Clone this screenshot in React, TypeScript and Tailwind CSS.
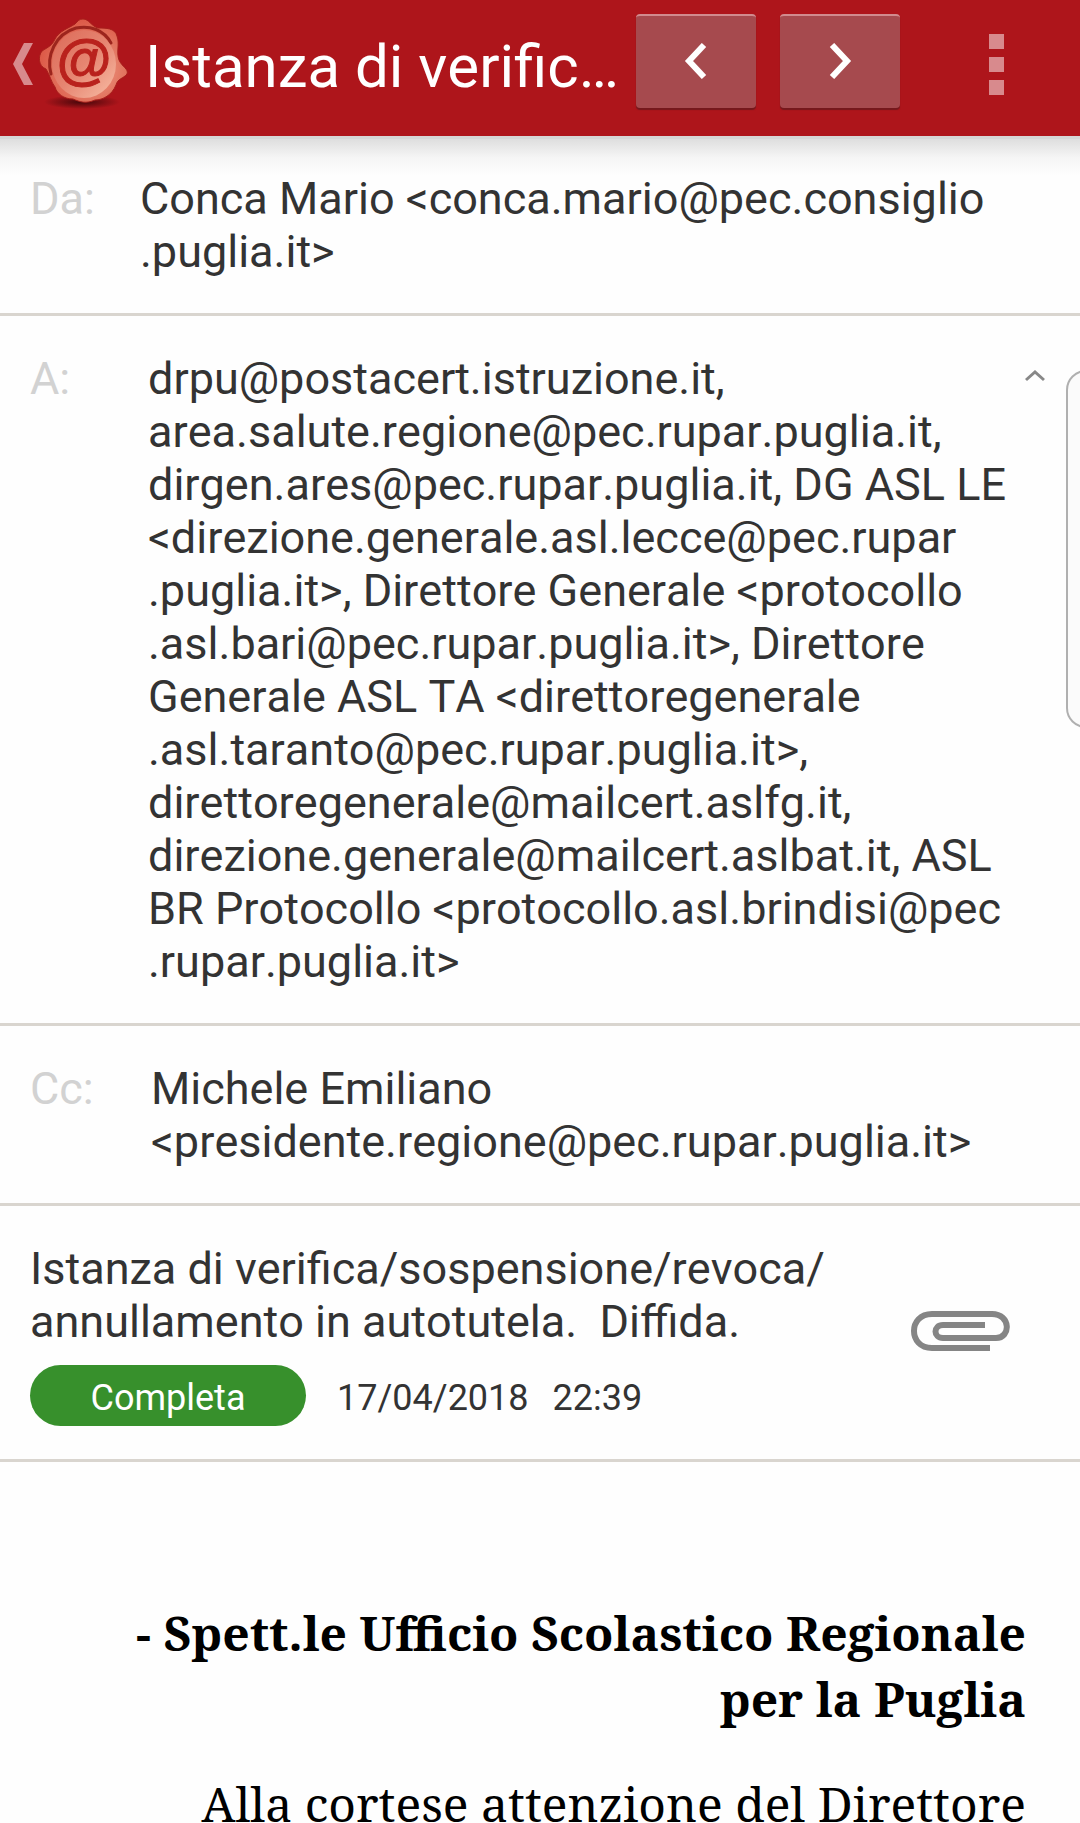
import type { ReactNode } from "react";

const sender = "Conca Mario <conca.mario@pec.consiglio\n.puglia.it>";

const recipients = `drpu@postacert.istruzione.it,
area.salute.regione@pec.rupar.puglia.it,
dirgen.ares@pec.rupar.puglia.it, DG ASL LE
<direzione.generale.asl.lecce@pec.rupar
.puglia.it>, Direttore Generale <protocollo
.asl.bari@pec.rupar.puglia.it>, Direttore
Generale ASL TA <direttoregenerale
.asl.taranto@pec.rupar.puglia.it>,
direttoregenerale@mailcert.aslfg.it,
direzione.generale@mailcert.aslbat.it, ASL
BR Protocollo <protocollo.asl.brindisi@pec
.rupar.puglia.it>`;

const copies = "Michele Emiliano\n<presidente.regione@pec.rupar.puglia.it>";

function SealLogo() {
  return (
    <svg width="92" height="94" viewBox="0 0 92 94" aria-hidden="true">
      <defs>
        <radialGradient id="wax" cx="0.6" cy="0.6" r="0.6">
          <stop offset="0" stopColor="#f0a08a" />
          <stop offset="0.6" stopColor="#e27560" />
          <stop offset="1" stopColor="#dd5a48" />
        </radialGradient>
        <linearGradient id="face" x1="0" y1="0" x2="1" y2="1">
          <stop offset="0" stopColor="#dc6a58" />
          <stop offset="0.5" stopColor="#e68571" />
          <stop offset="1" stopColor="#f8bea6" />
        </linearGradient>
        <radialGradient id="shade">
          <stop offset="0" stopColor="#3a0508" stopOpacity="0.9" />
          <stop offset="1" stopColor="#3a0508" stopOpacity="0" />
        </radialGradient>
      </defs>
      <ellipse cx="44" cy="84" rx="38" ry="7" fill="url(#shade)" />
      <path d="M45 1C51 1 53 8 60 10C68 10 77 10 79 18C82 26 78 34 81 42C84 49 91 51 89 56C85 61 80 60 78 67C74 77 65 82 57 82C48 86 42 84 35 81C26 81 19 76 17 69C13 64 12 57 8 51C0 48 0 38 4 33C10 29 14 28 17 21C21 13 31 10 37 6C40 3 41 1 45 1Z" fill="url(#wax)" stroke="#a81f1b" strokeWidth="1" />
      <path d="M13 56C8 38 17 16 38 10C52 7 66 12 73 25" fill="none" stroke="#9c251d" strokeWidth="3" strokeLinecap="round" />
      <ellipse cx="46" cy="46" rx="32" ry="34" fill="url(#face)" />
      <text x="46" y="60" textAnchor="middle" fontFamily="Liberation Sans" fontWeight="bold" fontSize="56" fill="#b9221d" stroke="#b9221d" strokeWidth="1">@</text>
    </svg>
  );
}

function Field({ label, labelClass, children }: { label: string; labelClass: string; children: ReactNode }) {
  return (
    <div className="flex border-b-[3px] border-[#d9d5cf] px-[30px] pt-9 pb-[35px]">
      <dt className={`shrink-0 text-[#d2d2d2] ${labelClass}`}>{label}</dt>
      <dd className="whitespace-pre">{children}</dd>
    </div>
  );
}

export default function App() {
  return (
    <div className="relative h-screen overflow-hidden bg-[#fefefe] font-[Roboto,sans-serif] text-[45px] leading-[53px] text-[#333] [font-kerning:none]">
      <header className="flex h-[136px] items-start bg-[#ae151b] text-white">
        <button aria-label="Indietro" className="flex shrink-0 gap-1 pt-[18px] pl-3">
          <svg className="mt-[25px]" width="22" height="42" viewBox="0 0 22 42" aria-hidden="true">
            <path d="M12 0H21L10 21L21 42H12L1 21Z" fill="#d88a8d" />
          </svg>
          <SealLogo />
        </button>
        <h1 className="min-w-0 flex-1 pt-8 pl-[15px] text-[60px] leading-[70px] whitespace-nowrap">Istanza di verific…</h1>
        <nav className="flex shrink-0 gap-6 pt-[14px]">
          <button aria-label="Precedente" className="flex h-[94px] w-[120px] items-center justify-center rounded-[4px] border-t-2 border-t-[#d18b8e] bg-[#a64a4e] pb-[2px] shadow-[0_2px_1px_#74181c]">
            <svg width="24" height="36" viewBox="0 0 24 36" aria-hidden="true"><path d="M20 2L5 18L20 34" fill="none" stroke="white" strokeWidth="6" /></svg>
          </button>
          <button aria-label="Successivo" className="flex h-[94px] w-[120px] items-center justify-center rounded-[4px] border-t-2 border-t-[#d18b8e] bg-[#a64a4e] pb-[2px] shadow-[0_2px_1px_#74181c]">
            <svg width="24" height="36" viewBox="0 0 24 36" aria-hidden="true"><path d="M4 2L19 18L4 34" fill="none" stroke="white" strokeWidth="6" /></svg>
          </button>
        </nav>
        <button aria-label="Altre opzioni" className="mr-[76px] ml-[89px] flex shrink-0 flex-col gap-[8px] pt-[34px]">
          <span className="size-[15px] bg-[#d88a8d]" />
          <span className="size-[15px] bg-[#d88a8d]" />
          <span className="size-[15px] bg-[#d88a8d]" />
        </button>
      </header>
      <div className="-mb-10 h-10 border-t-[3px] border-[#d6d6d6] bg-linear-to-b from-[#dedede] via-[#f5f5f5] to-[#fefefe]" />

      <main className="relative">
        <dl>
          <Field label="Da:" labelClass="w-[110px]">{sender}</Field>
          <div className="relative">
            <Field label="A:" labelClass="w-[118px]">{recipients}</Field>
            <button aria-label="Comprimi destinatari" className="absolute top-[54px] right-[35px]">
              <svg width="20" height="12" viewBox="0 0 20 12" aria-hidden="true"><path d="M1 10L10 2L19 10" fill="none" stroke="#888" strokeWidth="3" /></svg>
            </button>
            <div className="absolute top-[54px] right-0 h-[358px] w-[14px] overflow-hidden">
              <div className="h-full w-10 rounded-[20px] border-2 border-[#b0b0b0] bg-[#fbfbfb]" />
            </div>
          </div>
          <Field label="Cc:" labelClass="w-[121px]">{copies}</Field>
        </dl>

        <section className="flex items-start justify-between border-b-[3px] border-[#d9d5cf] pt-9 pr-[70px] pb-[33px] pl-[30px]">
          <div>
            <h2 className="whitespace-pre">{"Istanza di verifica/sospensione/revoca/\nannullamento in autotutela.  Diffida."}</h2>
            <div className="mt-[17px] flex items-center text-[36px]">
              <span className="flex h-[61px] w-[276px] items-center justify-center rounded-full bg-[#37902c] pt-[6px] text-white">Completa</span>
              <time dateTime="2018-04-17T22:39" className="ml-[31px] flex gap-6 pt-[6px]"><span>17/04/2018</span><span>22:39</span></time>
            </div>
          </div>
          <button aria-label="Allegati" className="mt-[68px]">
            <svg width="100" height="42" viewBox="0 0 100 42" aria-hidden="true">
              <path d="M80 38H22C-2 38-2 4 22 4H82C101 4 101 28 86 28H33C23 28 23 15 33 15H75" fill="none" stroke="#858585" strokeWidth="6" />
            </svg>
          </button>
        </section>

        <article className="px-[54px] pt-[138px] text-right font-['Noto_Serif','DejaVu_Serif_Condensed','DejaVu_Serif',serif] text-[48px] leading-[66px] text-black">
          <p className="mb-[39px] font-bold">- Spett.le Ufficio Scolastico Regionale<br />per la Puglia</p>
          <p>Alla cortese attenzione del Direttore</p>
        </article>
      </main>
    </div>
  );
}
